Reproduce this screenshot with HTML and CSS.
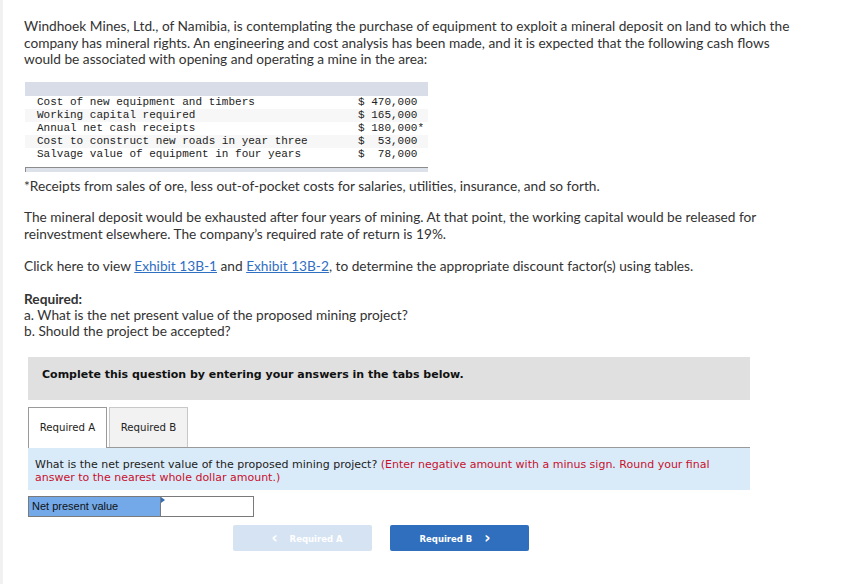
FILE: index.html
```html
<!DOCTYPE html>
<html>
<head>
<meta charset="utf-8">
<link rel="stylesheet" href="styles.css">
</head>
<body>
<div class="page">
  <div class="content">
    <p class="intro">Windhoek Mines, Ltd., of Namibia, is contemplating the purchase of equipment to exploit a mineral deposit on land to which the company has mineral rights. An engineering and cost analysis has been made, and it is expected that the following cash flows would be associated with opening and operating a mine in the area:</p>

    <div class="cashtable">
      <div class="cash-head"></div>
      <div class="cash-row"><span class="lbl">Cost of new equipment and timbers</span><span class="amt">$ 470,000</span></div>
      <div class="cash-row alt"><span class="lbl">Working capital required</span><span class="amt">$ 165,000</span></div>
      <div class="cash-row"><span class="lbl">Annual net cash receipts</span><span class="amt">$ 180,000*</span></div>
      <div class="cash-row alt"><span class="lbl">Cost to construct new roads in year three</span><span class="amt">$&nbsp; 53,000</span></div>
      <div class="cash-row"><span class="lbl">Salvage value of equipment in four years</span><span class="amt">$&nbsp; 78,000</span></div>
      <div class="cash-foot"></div>
    </div>

    <p class="note">*Receipts from sales of ore, less out-of-pocket costs for salaries, utilities, insurance, and so forth.</p>

    <p class="para">The mineral deposit would be exhausted after four years of mining. At that point, the working capital would be released for reinvestment elsewhere. The company’s required rate of return is 19%.</p>

    <p class="para">Click here to view <a href="#" class="link">Exhibit 13B-1</a> and <a href="#" class="link">Exhibit 13B-2</a>, to determine the appropriate discount factor(s) using tables.</p>

    <div class="required">
      <div class="req-title">Required:</div>
      <div>a. What is the net present value of the proposed mining project?</div>
      <div>b. Should the project be accepted?</div>
    </div>
  </div>

  <div class="work">
    <div class="instructions">Complete this question by entering your answers in the tabs below.</div>

    <div class="tabs">
      <div class="tab active">Required A</div>
      <div class="tab">Required B</div>
    </div>

    <div class="question">
      <div class="qline"><span>What is the net present value of the proposed mining project?</span> <span class="hint">(Enter negative amount with a minus sign. Round your final</span></div>
      <div class="qline hint">answer to the nearest whole dollar amount.)</div>
    </div>

    <div class="answer-row">
      <div class="answer-label">Net present value</div>
      <div class="answer-input"><span class="marker"></span></div>
    </div>

    <div class="nav">
      <button class="navbtn prev"><span class="chev">&lsaquo;</span> Required A</button>
      <button class="navbtn next">Required B <span class="chev">&rsaquo;</span></button>
    </div>
  </div>
</div>
</body>
</html>
```

FILE: styles.css
```css
* { box-sizing: border-box; }
html, body { margin: 0; padding: 0; background: #fff; }
body {
  font-family: "Lato", "Open Sans", sans-serif;
  color: #333;
}
.page {
  position: relative;
  border-left: 3px solid #f1f1f1;
  min-height: 584px;
}
.content {
  padding: 18px 0 0 21px;
  width: 800px;
}
.intro, .para, .note {
  margin: 0;
  font-size: 13.7px;
  line-height: 16.5px;
}
.intro { margin-bottom: 14px; width: 780px; }
.cashtable {
  width: 403px;
  margin-left: 1px;
  font-family: "Liberation Mono", "Courier New", monospace;
  font-size: 11px;
  color: #222;
}
.cash-head {
  height: 14px;
  background: #d8dde7;
}
.cash-row {
  display: flex;
  height: 13px;
  line-height: 13px;
  padding-left: 12px;
}
.cash-row.alt { background: #f7f7f7; }
.cash-row .lbl { width: 321px; }
.cash-row .amt { white-space: pre; }
.cash-foot {
  margin-top: 6px;
  height: 5px;
  background: #dde2ea;
  border-top: 1px solid #8c8c8c;
  border-left: 1px solid #8c8c8c;
}
.note { margin-top: 6px; margin-bottom: 15px; }
.para { margin-bottom: 16px; }
.link { color: #2f6fc4; text-decoration: underline; }
.required {
  margin-top: 12px;
  font-size: 13.7px;
  line-height: 16px;
}
.req-title { font-weight: bold; }

.work {
  margin: 18px 0 0 25px;
  width: 722px;
  font-family: "DejaVu Sans", Verdana, sans-serif;
}
.instructions {
  background: #e0e0e0;
  height: 43px;
  padding: 11px 0 0 14px;
  font-size: 11px;
  font-weight: bold;
  color: #111;
}
.tabs {
  display: flex;
  gap: 2px;
  margin-top: 7px;
}
.tab {
  width: 79px;
  height: 40px;
  line-height: 40px;
  text-align: center;
  font-size: 10.2px;
  color: #222;
  background: #f2f2f2;
  border: 1px solid #c8c8c8;
  border-bottom: none;
}
.tab.active {
  background: #fff;
  border-color: #9a9a9a;
  height: 41px;
  margin-bottom: -1px;
  position: relative;
}
.question {
  border-top: 1px solid #9a9a9a;
  background: #d9ebf8;
  height: 43px;
  padding: 10px 10px 0 7px;
  font-size: 11px;
  line-height: 13px;
  color: #222;
}
.qline { white-space: nowrap; }
.hint { color: #c8102e; }
.answer-row {
  display: flex;
  margin-top: 6px;
  height: 21px;
}
.answer-label {
  width: 133px;
  background: #73a9e8;
  border: 1px solid #7a7a7a;
  font-family: "Liberation Sans", Arial, sans-serif;
  font-size: 11px;
  line-height: 19px;
  padding-left: 3px;
  color: #111;
}
.answer-input {
  position: relative;
  width: 93px;
  border: 1px solid #7a7a7a;
  border-left: none;
  background: #fff;
}
.marker {
  position: absolute;
  left: 0;
  top: 0;
  width: 0;
  height: 0;
  border-top: 3px solid transparent;
  border-bottom: 3px solid transparent;
  border-left: 4px solid #2f6fbd;
}
.nav {
  display: flex;
  gap: 18px;
  margin: 8px 0 0 205px;
}
.navbtn {
  width: 139px;
  height: 26px;
  border: none;
  border-radius: 2px;
  font-family: "DejaVu Sans", Verdana, sans-serif;
  font-size: 8.5px;
  font-weight: bold;
  color: #fff;
  padding: 0;
}
.navbtn .chev { font-size: 15px; font-weight: bold; vertical-align: -1px; margin: 0 9px; }
.prev { background: #d6e3f3; }
.next { background: #2f6fbd; }
```
